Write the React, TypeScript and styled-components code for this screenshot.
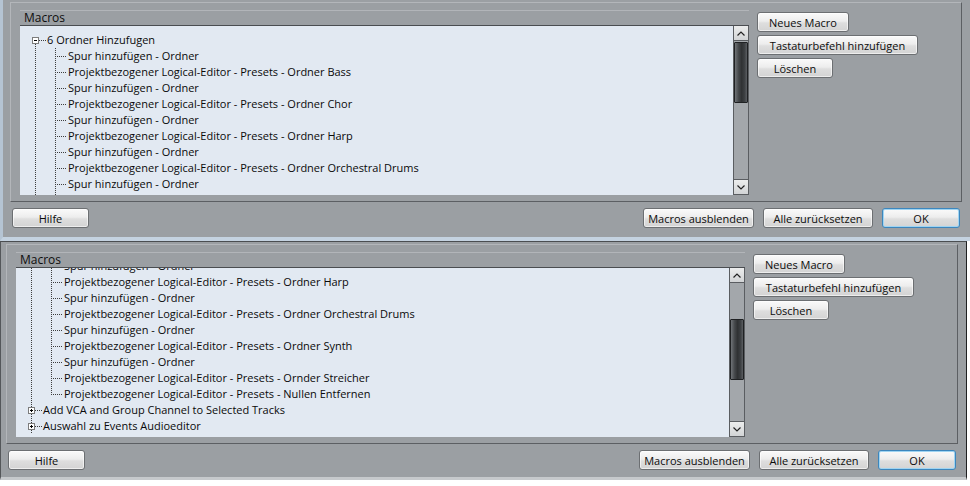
import * as React from 'react'
import styled, {createGlobalStyle} from 'styled-components'

const GlobalStyle = createGlobalStyle`
  html, body {
    margin: 0;
    padding: 0;
    background: #ffffff;
  }
  body {
    font-family: "Open Sans", "Noto Sans", sans-serif;
    font-size: 11px;
    color: #0c0c0c;
  }
`

type Variant = 'top' | 'bottom'

const Shot = styled.div<{ $variant: Variant }>`
  box-sizing: border-box;
  background: #9b9fa3;
  display: flex;
  flex-direction: column;
  width: ${p => (p.$variant === 'top' ? 970 : 967)}px;
  height: ${p => (p.$variant === 'top' ? 241 : 239)}px;
  padding: 2px 8px 0 ${p => (p.$variant === 'top' ? 7 : 5)}px;
  border-left: ${p => (p.$variant === 'top' ? '3px solid #b5c4d3' : '1px solid #54575a')};
  border-right: ${p => (p.$variant === 'top' ? 'none' : '1px solid #1f2022')};
  border-top: ${p => (p.$variant === 'top' ? 'none' : '1px solid #4b4e51')};
  border-bottom: ${p => (p.$variant === 'top' ? '4px solid #c4d2e0' : '3px solid #c6c9cc')};
`

const GroupFrame = styled.div`
  box-sizing: border-box;
  height: 200px;
  display: flex;
  gap: 8px;
  padding: 7px 0 6px 9px;
  border: 1px solid;
  border-color: #b3b6ba #5c5f63 #5c5f63 #b3b6ba;
`

const TreePanel = styled.div`
  width: 729px;
  display: flex;
  flex-direction: column;
`

const Header = styled.div`
  box-sizing: border-box;
  height: 16px;
  line-height: 14px;
  padding-left: 4px;
  font-size: 12px;
  color: #0e0e0e;
  border-top: 1px solid #b2b5b9;
  border-bottom: 1px solid #4a4d51;
`

const ListBox = styled.div`
  height: 169px;
  display: flex;
  background: #e2e9f2;
`

const Viewport = styled.div`
  flex: 1;
  overflow: hidden;
`

const Rows = styled.div<{ $offset: number }>`
  margin-top: ${p => p.$offset}px;
`

const RowLine = styled.div`
  height: 16px;
  display: flex;
  align-items: center;
  white-space: nowrap;
`

const Label = styled.span`
  line-height: 16px;
  color: #0a0a0a;
`

const GuideSvg = styled.svg`
  flex: none;
  display: block;
`

const Dots = styled.line`
  stroke: #3e3e3e;
  stroke-width: 1;
  stroke-dasharray: 1 1;
`

const ScrollBar = styled.div`
  box-sizing: border-box;
  width: 16px;
  display: flex;
  flex-direction: column;
  border-left: 1px solid #5a5d61;
  border-right: 1px solid #5a5d61;
  border-bottom: 1px solid #5a5d61;
  background: #a3a7ab;
`

const ArrowButton = styled.div<{ $down?: boolean }>`
  box-sizing: border-box;
  height: 15px;
  display: flex;
  align-items: center;
  justify-content: center;
  background: linear-gradient(#eceded, #d2d4d6);
  border-top: ${p => (p.$down ? '1px solid #5a5d61' : 'none')};
  border-bottom: ${p => (p.$down ? 'none' : '1px solid #5a5d61')};
`

const Track = styled.div`
  flex: 1;
  position: relative;
`

const Thumb = styled.div`
  position: absolute;
  left: 0;
  right: 0;
  box-sizing: border-box;
  border: 1px solid #1f2123;
  border-radius: 1px;
  background: linear-gradient(to right, #6f7377, #45484b 30%, #2f3133 55%, #3d4043 80%, #5b5e62);
`

const SideButtons = styled.div`
  display: flex;
  flex-direction: column;
  align-items: flex-start;
  gap: 3px;
  margin-top: 2px;
`

const Btn = styled.button<{ $w: number; $default?: boolean }>`
  box-sizing: border-box;
  width: ${p => p.$w}px;
  height: 20px;
  padding: 0;
  font-family: "Open Sans", "Noto Sans", sans-serif;
  font-size: 11px;
  color: #0c0c0c;
  border-radius: 3px;
  border: 1px solid ${p => (p.$default ? '#3c86bd' : '#6c6f72')};
  background: linear-gradient(#fafafa, #ededed 45%, #dedede 55%, #d3d3d3);
  box-shadow: ${p => (p.$default ? 'inset 0 0 0 1px #9fd4f2' : 'inset 0 0 0 1px rgba(255,255,255,0.6)')};
`

const Footer = styled.div`
  display: flex;
  justify-content: space-between;
  margin-top: 6px;
  padding: 0 2px 0 2px;
`

const FooterRight = styled.div`
  display: flex;
  gap: 9px;
`

type Row = {
  text: string
  level: 0 | 1
  expander?: '+' | '-'
  first?: boolean
  last?: boolean
}

const TreeGuide: React.FC<{ row: Row }> = ({row}) => {
  if (row.level === 0) {
    return (
      <GuideSvg width={27} height={16}>
        {!row.first && <Dots x1={15.5} y1={0} x2={15.5} y2={5}/>}
        <Dots x1={15.5} y1={12} x2={15.5} y2={16}/>
        <Dots x1={19} y1={8.5} x2={26} y2={8.5}/>
        <rect x={12.5} y={5.5} width={6} height={6} fill="#ffffff" stroke="#7c7c7c"/>
        <line x1={14} y1={8.5} x2={17} y2={8.5} stroke="#000"/>
        {row.expander === '+' && <line x1={15.5} y1={7} x2={15.5} y2={10} stroke="#000"/>}
      </GuideSvg>
    )
  }
  // an empty row only carries the guide lines on past the visible part
  const connector = row.text !== ''
  return (
    <GuideSvg width={48} height={16}>
      <Dots x1={15.5} y1={0} x2={15.5} y2={16}/>
      <Dots x1={35.5} y1={0} x2={35.5} y2={row.last ? 9 : 16}/>
      {connector && <Dots x1={37} y1={8.5} x2={47} y2={8.5}/>}
    </GuideSvg>
  )
}

const Chevron: React.FC<{ down?: boolean }> = ({down}) => (
  <svg width={8} height={5} viewBox="0 0 8 5">
    <polyline
      points={down ? '0.5,0.5 4,4 7.5,0.5' : '0.5,4.5 4,1 7.5,4.5'}
      fill="none"
      stroke="#222"
      strokeWidth={1.2}
    />
  </svg>
)

const PLE = 'Projektbezogener Logical-Editor - Presets - '
const SPUR = 'Spur hinzufügen - Ordner'

const topRows: Row[] = [
  {text: '6 Ordner Hinzufugen', level: 0, expander: '-', first: true},
  {text: SPUR, level: 1},
  {text: PLE + 'Ordner Bass', level: 1},
  {text: SPUR, level: 1},
  {text: PLE + 'Ordner Chor', level: 1},
  {text: SPUR, level: 1},
  {text: PLE + 'Ordner Harp', level: 1},
  {text: SPUR, level: 1},
  {text: PLE + 'Ordner Orchestral Drums', level: 1},
  {text: SPUR, level: 1},
  {text: '', level: 1},
]

const bottomRows: Row[] = [
  {text: SPUR, level: 1},
  {text: PLE + 'Ordner Harp', level: 1},
  {text: SPUR, level: 1},
  {text: PLE + 'Ordner Orchestral Drums', level: 1},
  {text: SPUR, level: 1},
  {text: PLE + 'Ordner Synth', level: 1},
  {text: SPUR, level: 1},
  {text: PLE + 'Ornder Streicher', level: 1},
  {text: PLE + 'Nullen Entfernen', level: 1, last: true},
  {text: 'Add VCA and Group Channel to Selected Tracks', level: 0, expander: '+'},
  {text: 'Auswahl zu Events Audioeditor', level: 0, expander: '+'},
]

interface IDialogProps {
  variant: Variant
  rows: Row[]
  offset: number
  thumbTop: number
}

const MacroDialog: React.FC<IDialogProps> = ({variant, rows, offset, thumbTop}) => (
  <Shot $variant={variant}>
    <GroupFrame>
      <TreePanel>
        <Header>Macros</Header>
        <ListBox>
          <Viewport>
            <Rows $offset={offset}>
              {rows.map((row, i) => (
                <RowLine key={`row_${i}`}>
                  <TreeGuide row={row}/>
                  <Label>{row.text}</Label>
                </RowLine>
              ))}
            </Rows>
          </Viewport>
          <ScrollBar>
            <ArrowButton><Chevron/></ArrowButton>
            <Track>
              <Thumb style={{top: thumbTop, height: 61}}/>
            </Track>
            <ArrowButton $down><Chevron down/></ArrowButton>
          </ScrollBar>
        </ListBox>
      </TreePanel>
      <SideButtons>
        <Btn $w={92}>Neues Macro</Btn>
        <Btn $w={161}>Tastaturbefehl hinzufügen</Btn>
        <Btn $w={76}>Löschen</Btn>
      </SideButtons>
    </GroupFrame>
    <Footer>
      <Btn $w={77}>Hilfe</Btn>
      <FooterRight>
        <Btn $w={111}>Macros ausblenden</Btn>
        <Btn $w={110}>Alle zurücksetzen</Btn>
        <Btn $w={78} $default>OK</Btn>
      </FooterRight>
    </Footer>
  </Shot>
)

export default function App() {
  return (
    <>
      <GlobalStyle/>
      <MacroDialog variant="top" rows={topRows} offset={6} thumbTop={1}/>
      <MacroDialog variant="bottom" rows={bottomRows} offset={-10} thumbTop={36}/>
    </>
  )
}
